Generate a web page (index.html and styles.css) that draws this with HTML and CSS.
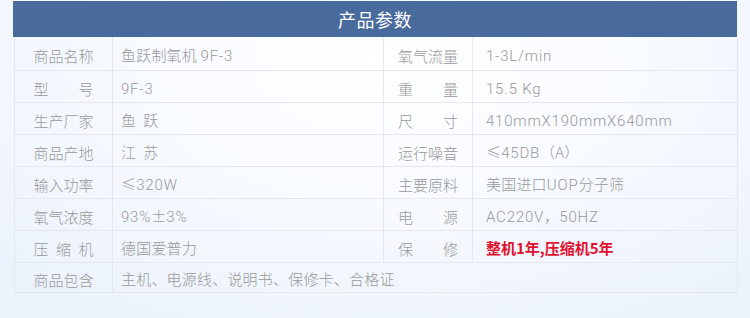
FILE: index.html
```html
<!DOCTYPE html>
<html lang="zh-CN">
<head>
<meta charset="utf-8">
<link rel="stylesheet" href="styles.css">
</head>
<body>
<div class="panel">
  <div class="title">产品参数</div>
  <table class="params">
    <colgroup>
      <col class="c1"><col class="c2"><col class="c3"><col class="c4">
    </colgroup>
    <tr><td class="lab"><span class="j">商品名称</span></td><td class="val">鱼跃制氧机 <span class="en">9F-3</span></td><td class="lab r"><span class="j">氧气流量</span></td><td class="val r"><span class="en">1-3L/min</span></td></tr>
    <tr><td class="lab"><span class="j">型号</span></td><td class="val"><span class="en">9F-3</span></td><td class="lab r"><span class="j">重量</span></td><td class="val r"><span class="en">15.5 Kg</span></td></tr>
    <tr><td class="lab"><span class="j">生产厂家</span></td><td class="val">鱼&nbsp;&nbsp;跃</td><td class="lab r"><span class="j">尺寸</span></td><td class="val r"><span class="en">410mmX190mmX640mm</span></td></tr>
    <tr><td class="lab"><span class="j">商品产地</span></td><td class="val">江&nbsp;&nbsp;苏</td><td class="lab r"><span class="j">运行噪音</span></td><td class="val r">≤<span class="en">45DB</span>（A）</td></tr>
    <tr><td class="lab"><span class="j">输入功率</span></td><td class="val">≤<span class="en">320W</span></td><td class="lab r"><span class="j">主要原料</span></td><td class="val r">美国进口<span class="en">UOP</span>分子筛</td></tr>
    <tr><td class="lab"><span class="j">氧气浓度</span></td><td class="val"><span class="en">93%</span>±<span class="en">3%</span></td><td class="lab r"><span class="j">电源</span></td><td class="val r"><span class="en">AC220V</span>，<span class="en">50HZ</span></td></tr>
    <tr><td class="lab"><span class="j">压缩机</span></td><td class="val">德国爱普力</td><td class="lab r"><span class="j">保修</span></td><td class="val r"><span class="warn">整机1年,压缩机5年</span></td></tr>
    <tr><td class="lab"><span class="j">商品包含</span></td><td class="val" colspan="3">主机、电源线、说明书、保修卡、合格证</td></tr>
  </table>
</div>
</body>
</html>
```

FILE: styles.css
```css
html, body {
  margin: 0;
  padding: 0;
}
body {
  width: 750px;
  height: 318px;
  overflow: hidden;
  font-family: "Noto Sans CJK SC", "Noto Sans", sans-serif;
  background: radial-gradient(ellipse 70% 90% at 52% 20%, #ffffff 0%, #f8fbff 45%, #edf3fc 100%);
}
.panel {
  margin: 1px 0 0 13px;
  width: 724px;
}
.title {
  height: 36px;
  background: #486a9c;
  color: #fff;
  font-size: 18px;
  line-height: 36px;
  text-align: center;
  letter-spacing: 0.5px;
}
.params {
  border-collapse: collapse;
  width: 723px;
  margin-left: 1px;
  table-layout: fixed;
}
.c1 { width: 98px; }
.c2 { width: 271px; }
.c3 { width: 89px; }
.c4 { width: 265px; }
.params td {
  height: 32px;
  padding: 3px 0 0;
  border: 1px solid #e6e7ea;
  border-top: none;
  font-size: 15px;
  color: #999;
  white-space: nowrap;
  box-sizing: border-box;
}
.params tr:first-child td { height: 33px; }
.params tr:last-child td { height: 30px; }
.lab {
  text-align: center;
  color: #969696;
  font-weight: 300;
}
.j {
  display: inline-block;
  width: 60px;
  text-align: justify;
  text-align-last: justify;
  vertical-align: middle;
}
.val {
  padding-left: 8px !important;
  font-weight: 300;
  letter-spacing: 0.2px;
  color: #9a9a9a;
}
.val.r {
  padding-left: 13px !important;
}
.en {
  font-family: "Roboto", "Noto Sans CJK SC", sans-serif;
  font-weight: 300;
  letter-spacing: 0.8px;
}
.warn {
  color: #e0102e;
  font-weight: 700;
  letter-spacing: 0;
}
```
